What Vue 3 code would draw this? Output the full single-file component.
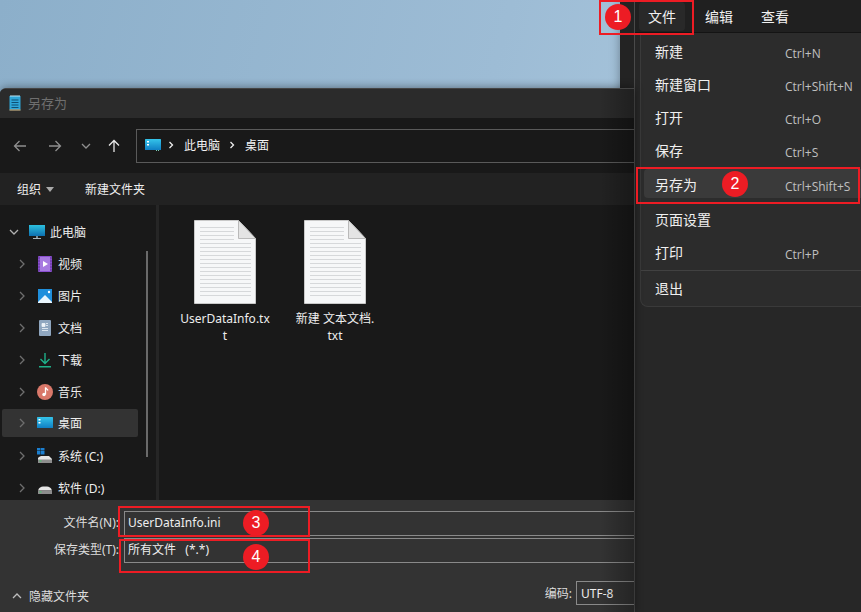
<script setup>
const menuItems = [
  { label: '新建', keys: 'Ctrl+N' },
  { label: '新建窗口', keys: 'Ctrl+Shift+N' },
  { label: '打开', keys: 'Ctrl+O' },
  { label: '保存', keys: 'Ctrl+S' },
  { label: '另存为', keys: 'Ctrl+Shift+S', active: true },
  { label: '页面设置', keys: '' },
  { label: '打印', keys: 'Ctrl+P' }
]

const tree = [
  { label: '视频', icon: 'video' },
  { label: '图片', icon: 'picture' },
  { label: '文档', icon: 'doc' },
  { label: '下载', icon: 'download' },
  { label: '音乐', icon: 'music' },
  { label: '桌面', icon: 'desktop', active: true },
  { label: '系统 (C:)', icon: 'sys' },
  { label: '软件 (D:)', icon: 'drive' }
]

const files = [
  { name: 'UserDataInfo.tx', rest: 't' },
  { name: '新建 文本文档.', rest: 'txt' }
]

const lineRows = Array.from({ length: 18 }, (_, i) => 7.5 + i * 4)

const marks = [
  { n: 1, cls: 'm1' },
  { n: 2, cls: 'm2' },
  { n: 3, cls: 'm3' },
  { n: 4, cls: 'm4' }
]
const boxes = ['b1', 'b2', 'b3', 'b4']
</script>

<template>
  <div class="desktop">
    <!-- 记事本窗口 -->
    <div class="notepad">
      <div class="menubar">
        <span class="top-item current">文件</span>
        <span class="top-item">编辑</span>
        <span class="top-item last">查看</span>
      </div>
      <div class="menu">
        <div v-for="m in menuItems" :key="m.label" class="menu-row" :class="{ active: m.active }">
          <span class="menu-label">{{ m.label }}</span>
          <span class="menu-keys">{{ m.keys }}</span>
        </div>
        <div class="menu-line"></div>
        <div class="menu-row"><span class="menu-label">退出</span></div>
      </div>
    </div>

    <!-- 另存为对话框 -->
    <div class="dialog">
      <div class="titlebar">
        <svg width="12" height="16" viewBox="0 0 12 16">
          <rect x="0.5" y="1" width="11" height="14.5" fill="#2fa6d8" />
          <rect x="0.5" y="14.5" width="11" height="1" fill="#e08a3c" />
          <path d="M2 0v2M4 0v2M6 0v2M8 0v2M10 0v2" stroke="#bfe6f5" />
          <path d="M2.5 5h7M2.5 7.500h7M2.500 10h7M2.500 12.500h7" stroke="#0f4f73" />
        </svg>
        <span>另存为</span>
      </div>

      <div class="navbar">
        <svg class="nav-btn" width="14" height="14" viewBox="0 0 14 14"><path d="M13 7H1.500M6.500 2 1.500 7l5 5" fill="none" stroke="#8f8f8f" stroke-width="1.300" /></svg>
        <svg class="nav-btn fwd" width="14" height="14" viewBox="0 0 14 14"><path d="M1 7h11.500M7.500 2l5 5-5 5" fill="none" stroke="#8f8f8f" stroke-width="1.300" /></svg>
        <svg class="nav-btn down" width="10" height="10" viewBox="0 0 10 10"><path d="M1 3l4 4 4-4" fill="none" stroke="#8f8f8f" stroke-width="1.300" /></svg>
        <svg class="nav-btn up" width="14" height="14" viewBox="0 0 14 14"><path d="M7 13V1.500M2 6.500l5-5 5 5" fill="none" stroke="#e8e8e8" stroke-width="1.300" /></svg>
        <div class="address">
          <svg width="16" height="12" viewBox="0 0 16 12">
            <defs>
              <linearGradient id="deskA" x1="0" y1="0" x2="0" y2="1"><stop offset="0" stop-color="#35c4ea" /><stop offset="1" stop-color="#0f7fc4" /></linearGradient>
            </defs>
            <rect width="16" height="11" rx="0.500" fill="url(#deskA)" />
            <rect x="2" y="2" width="2" height="1.500" fill="#fff" />
            <rect x="2" y="5" width="2" height="1.500" fill="#fff" />
            <path d="M11 11.500h1M13 11.500h1" stroke="#9fd" stroke-width="0.800" />
          </svg>
          <svg class="crumb" width="6" height="8" viewBox="0 0 6 8"><path d="M1.500 1l3 3-3 3" fill="none" stroke="#eee" stroke-width="1.300" /></svg>
          <span>此电脑</span>
          <svg class="crumb" width="6" height="8" viewBox="0 0 6 8"><path d="M1.500 1l3 3-3 3" fill="none" stroke="#eee" stroke-width="1.300" /></svg>
          <span>桌面</span>
        </div>
      </div>

      <div class="toolbar">
        <span class="tool">组织<i class="caret"></i></span>
        <span class="tool new-folder">新建文件夹</span>
      </div>

      <div class="body">
        <div class="sidebar">
          <div class="tree-row root">
            <svg class="arrow" width="10" height="10" viewBox="0 0 10 10"><path d="M1 3l4 4 4-4" fill="none" stroke="#b0b0b0" stroke-width="1.300" /></svg>
            <svg class="tree-icon pc" width="16" height="16" viewBox="0 0 16 16">
              <defs>
                <linearGradient id="pcA" x1="0" y1="0" x2="0" y2="1"><stop offset="0" stop-color="#2cc0de" /><stop offset="1" stop-color="#0d6fb0" /></linearGradient>
              </defs>
              <rect y="1" width="16" height="11" fill="url(#pcA)" />
              <rect x="7" y="12" width="2" height="2" fill="#7d8b94" />
              <rect x="4" y="14" width="8" height="1" fill="#a9b4ba" />
            </svg>
            <span>此电脑</span>
          </div>
          <div v-for="t in tree" :key="t.label" class="tree-row" :class="{ active: t.active }">
            <svg class="arrow" width="8" height="10" viewBox="0 0 8 10"><path d="M2 1l4 4-4 4" fill="none" stroke="#6e6e6e" stroke-width="1.300" /></svg>
            <svg class="tree-icon" width="16" height="16" viewBox="0 0 16 16">
              <template v-if="t.icon === 'video'">
                <rect x="1" y="0" width="14" height="16" rx="1" fill="#8a4fd0" />
                <rect x="3" y="1" width="10" height="14" fill="#a77ae0" />
                <path d="M6 5l5 3-5 3z" fill="#fff" />
                <path d="M1.500 2h1M1.500 5h1M1.500 8h1M1.500 11h1M1.500 14h1M13.500 2h1M13.500 5h1M13.500 8h1M13.500 11h1M13.500 14h1" stroke="#3c2160" />
              </template>
              <template v-else-if="t.icon === 'picture'">
                <rect x="1" y="1" width="14" height="14" fill="#1f8fdc" />
                <path d="M1 14l7-7 7 7v1H1z" fill="#eaf6fd" />
                <circle cx="12" cy="4" r="1.200" fill="#fff" />
              </template>
              <template v-else-if="t.icon === 'doc'">
                <rect x="2" y="0" width="12" height="16" rx="1" fill="#8fa6bf" />
                <path d="M5 3.500h3v3H5zM9 3.500h2M9 5.500h2M5 8.500h6M5 10.500h6" fill="#eef3f8" stroke="#eef3f8" stroke-width="0.800" />
              </template>
              <template v-else-if="t.icon === 'download'">
                <path d="M8 1v10M3.500 7l4.500 4.500L12.500 7" fill="none" stroke="#1eb08a" stroke-width="1.400" />
                <rect x="2" y="14" width="12" height="1.500" fill="#1eb08a" />
              </template>
              <template v-else-if="t.icon === 'music'">
                <circle cx="8" cy="8" r="8" fill="#d9786a" />
                <path d="M8.500 3.500v7" stroke="#fff" stroke-width="1.300" />
                <circle cx="7" cy="10.500" r="1.700" fill="#fff" />
                <path d="M8.500 3.500c.5 1.500 2 1.500 2.500 3" fill="none" stroke="#fff" stroke-width="1.100" />
              </template>
              <template v-else-if="t.icon === 'desktop'">
                <rect y="2" width="16" height="11" rx="0.500" fill="url(#deskA)" />
                <rect x="1.500" y="4" width="2" height="1.500" fill="#fff" />
                <rect x="1.500" y="7" width="2" height="1.500" fill="#fff" />
              </template>
              <template v-else-if="t.icon === 'sys'">
                <rect x="0" y="-1" width="3.500" height="3.500" fill="#1b7fd0" />
                <rect x="4" y="-1" width="3.500" height="3.500" fill="#1b7fd0" />
                <rect x="0" y="3" width="3.500" height="3.500" fill="#1b7fd0" />
                <rect x="4" y="3" width="3.500" height="3.500" fill="#1b7fd0" />
                <path d="M2 9l2-1h8l3 3v1H1v-2z" fill="#e4e4e4" />
                <rect x="1" y="11.500" width="14" height="3.500" fill="#8d8d8d" />
                <rect x="2.500" y="12.500" width="2" height="1" fill="#3fd06a" />
              </template>
              <template v-else>
                <path d="M1 10.500C2 7.500 4 6.500 6 6.500h4c2 0 4 1 5 4z" fill="#e4e4e4" />
                <rect x="1" y="10.500" width="14" height="3.500" fill="#8d8d8d" />
                <rect x="2.500" y="11.500" width="2" height="1" fill="#3fd06a" />
              </template>
            </svg>
            <span>{{ t.label }}</span>
          </div>
          <div class="scroll-thumb"></div>
        </div>
        <div class="splitter"></div>
        <div class="files">
          <div v-for="f in files" :key="f.name" class="file">
            <svg width="62" height="84" viewBox="0 0 62 84">
              <path d="M0.500 0.500H44.500L61.500 18.500V83.500H0.500z" fill="#f6f7f8" stroke="#c9c9c9" />
              <path d="M44.500 0.500V18.500H61.500z" fill="#e4e4e4" stroke="#b9b9b9" />
              <path v-for="y in lineRows" :key="y" :d="`M6 ${y}H${y < 20 ? 40 : 57}`" stroke="#d6d8da" stroke-width="1" />
            </svg>
            <div class="file-name">{{ f.name }}<br />{{ f.rest }}</div>
          </div>
        </div>
      </div>

      <div class="footer">
        <div class="field">
          <label>文件名(N):</label>
          <div class="input">UserDataInfo.ini</div>
        </div>
        <div class="field second">
          <label>保存类型(T):</label>
          <div class="input">所有文件&nbsp;&nbsp;&nbsp;(*.*)</div>
        </div>
        <div class="footer-bottom">
          <span class="hide-folder">
            <svg width="10" height="8" viewBox="0 0 10 8"><path d="M1 6l4-4 4 4" fill="none" stroke="#bdbdbd" stroke-width="1.300" /></svg>
            隐藏文件夹
          </span>
          <span class="encoding">编码:</span>
          <div class="enc-box">UTF-8</div>
        </div>
      </div>
    </div>

    <!-- 红色标注 -->
    <div v-for="b in boxes" :key="b" class="red-box" :class="b"></div>
    <div v-for="m in marks" :key="m.n" class="mark" :class="m.cls">{{ m.n }}</div>
  </div>
</template>

<style>
html, body {
  margin: 0;
  background: #222;
}
</style>

<style scoped>
.desktop {
  position: relative;
  width: 861px;
  height: 612px;
  overflow: hidden;
  background: linear-gradient(105deg, #8cafca 0%, #9dbcd5 50%, #b4d0e4 100%);
  font-family: "Noto Sans", "Noto Sans CJK SC", sans-serif;
  font-size: 12px;
  color: #e8e8e8;
}

/* 记事本 */
.notepad {
  position: absolute;
  left: 620px;
  top: 0;
  right: 0;
  bottom: 0;
  background: linear-gradient(90deg, #232323 14px, #4a4a4a 14px, #4a4a4a 15px, #272727 15px);
  box-shadow: 0 0 10px rgba(0, 0, 0, 0.35);
}
.menubar {
  display: flex;
  align-items: center;
  height: 33px;
  margin-left: 15px;
  padding-left: 4px;
  gap: 11px;
  font-size: 14px;
  background: #202020;
  border-bottom: 1px solid #141414;
  box-sizing: border-box;
}
.top-item {
  padding: 0 9px;
  line-height: 29px;
  color: #f0f0f0;
  border-radius: 4px;
}
.top-item.current {
  background: #292929;
}
.top-item.last {
  margin-left: -1px;
}
.menu {
  margin-left: 20px;
  width: 245px;
  height: 274px;
  box-sizing: border-box;
  padding-top: 1px;
  background: #2c2c2c;
  border-radius: 0 0 0 8px;
  border-left: 1px solid #3a3a3a;
  border-bottom: 1px solid #3a3a3a;
}
.menu-row {
  display: flex;
  align-items: center;
  height: 33px;
  padding-left: 14px;
  font-size: 14px;
  color: #f0f0f0;
}
.menu-label {
  width: 130px;
  flex: none;
}
.menu-row.active {
  height: 29px;
  margin: 3px 0 4px 3px;
  padding-left: 11px;
  background: #3a3a3a;
  border-radius: 4px;
}
.menu-keys {
  margin-top: 6px;
  font-family: "Open Sans", "Noto Sans", sans-serif;
  font-size: 12px;
  white-space: nowrap;
  color: #c0c0c0;
}
.menu-line {
  height: 1px;
  margin-top: 2px;
  background: #414141;
}

/* 对话框 */
.dialog {
  position: absolute;
  left: 0;
  top: 88px;
  width: 634px;
  height: 524px;
  display: flex;
  flex-direction: column;
  border-top: 1px solid #444;
  box-sizing: border-box;
  border-radius: 6px 0 0 0;
  background: #191919;
  overflow: hidden;
  box-shadow: 0 0 10px rgba(0, 0, 0, 0.45);
}
/* 右边记事本投下的阴影 */
.dialog::after {
  content: "";
  position: absolute;
  top: 0;
  right: 0;
  bottom: 0;
  width: 34px;
  background: linear-gradient(90deg, rgba(0, 0, 0, 0), rgba(0, 0, 0, 0.28));
  pointer-events: none;
}
.titlebar {
  display: flex;
  align-items: center;
  gap: 7px;
  height: 27px;
  padding: 0 0 2px 9px;
  flex: none;
  background: #2b2b2b;
  color: #6f6f6f;
  font-size: 13px;
}
.navbar {
  display: flex;
  align-items: center;
  height: 55px;
  background: #191919;
  flex: none;
}
.nav-btn {
  margin-left: 13px;
}
.nav-btn.fwd {
  margin-left: 21px;
}
.nav-btn.down {
  margin-left: 19px;
}
.nav-btn.up {
  margin-left: 16px;
}
.address {
  display: flex;
  align-items: center;
  margin-left: 15px;
  flex: 1;
  height: 34px;
  box-sizing: border-box;
  padding: 0 0 1px 8px;
  border: 1px solid #5a5a5a;
  border-right: none;
  color: #f2f2f2;
}
.address span {
  margin-right: 2px;
}
.crumb {
  margin: 0 10px 0 7px;
}
.toolbar {
  display: flex;
  align-items: center;
  height: 32px;
  padding-left: 17px;
  background: #222;
  flex: none;
}
.tool {
  display: flex;
  align-items: center;
  color: #eee;
}
.caret {
  width: 0;
  height: 0;
  margin-left: 5px;
  border: 4px solid transparent;
  border-top: 5px solid #aaa;
  border-bottom: none;
}
.new-folder {
  margin-left: 31px;
}
.body {
  display: flex;
  flex: 1;
  min-height: 0;
  background: #191919;
}
.sidebar {
  position: relative;
  width: 156px;
  padding-top: 11px;
  box-sizing: border-box;
  flex: none;
  overflow: hidden;
}
.tree-row {
  display: flex;
  align-items: center;
  height: 32px;
  padding-left: 18px;
  color: #eee;
}
.tree-row.root {
  padding-left: 9px;
}
.tree-row.active {
  background: #333;
  width: 136px;
  height: 28px;
  margin: 1px 0 3px 2px;
  padding-left: 16px;
  box-sizing: border-box;
  border-radius: 2px;
}
.arrow {
  margin-right: 11px;
}
.root .arrow {
  margin-right: 10px;
}
.tree-icon {
  flex: none;
  margin-right: 5px;
}
.tree-icon.pc {
  margin-right: 5px;
}
.scroll-thumb {
  position: absolute;
  left: 146px;
  top: 46px;
  width: 2px;
  height: 206px;
  background: #6a6a6a;
}
.splitter {
  width: 3px;
  background: #262626;
  flex: none;
}
.files {
  display: flex;
  align-items: flex-start;
  gap: 10px;
  padding: 15px 0 0 16px;
  flex: 1;
}
.file {
  width: 100px;
  text-align: center;
}
.file svg {
  display: block;
  margin: 0 auto 6px;
}
.file-name {
  line-height: 17px;
  color: #eee;
}

/* 底部 */
.footer {
  flex: none;
  height: 112px;
  box-sizing: border-box;
  padding-top: 11px;
  background: #333;
}
.field {
  display: flex;
  height: 25px;
}
.field.second {
  margin-top: 2px;
}
.field label {
  width: 119px;
  text-align: right;
  line-height: 23px;
  color: #ddd;
}
.input {
  flex: 1;
  margin-left: 5px;
  padding-left: 3px;
  line-height: 22px;
  color: #eee;
  border: 1px solid #8a8a8a;
  border-right: none;
}
.footer-bottom {
  display: flex;
  align-items: center;
  height: 24px;
  margin-top: 18px;
  padding-left: 12px;
}
.hide-folder {
  display: flex;
  align-items: center;
  gap: 7px;
  margin-top: 6px;
  color: #ddd;
}
.encoding {
  margin-left: auto;
  color: #ddd;
}
.enc-box {
  width: 58px;
  height: 24px;
  margin-left: 4px;
  box-sizing: border-box;
  padding-left: 4px;
  line-height: 23px;
  color: #eee;
  border: 1px solid #8a8a8a;
  border-right: none;
}

/* 红色标注 */
.red-box {
  position: absolute;
  box-sizing: border-box;
  border: 2px solid #ed1c24;
}
.b1 { left: 599px; top: 0; width: 95px; height: 35px; }
.b2 { left: 636px; top: 167px; width: 224px; height: 37px; }
.b3 { left: 118px; top: 506px; width: 192px; height: 31px; }
.b4 { left: 119px; top: 539px; width: 191px; height: 34px; }
.mark {
  position: absolute;
  width: 26px;
  height: 26px;
  border-radius: 50%;
  background: #ed1c24;
  color: #fff;
  font-family: "Liberation Sans", sans-serif;
  font-size: 16px;
  line-height: 26px;
  text-align: center;
}
.m1 { left: 605px; top: 4px; }
.m2 { left: 722px; top: 171px; }
.m3 { left: 243px; top: 510px; }
.m4 { left: 243px; top: 544px; }
</style>
